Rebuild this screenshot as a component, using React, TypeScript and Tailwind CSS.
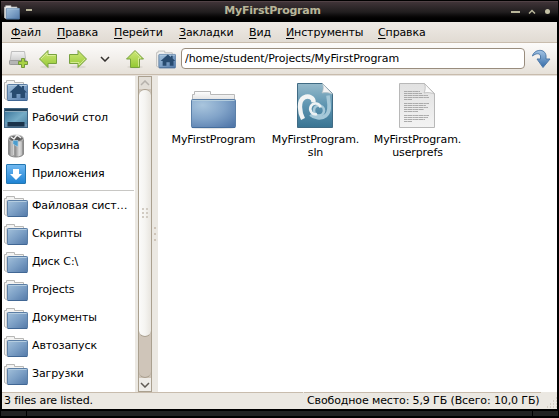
import React from "react";

type FolderProps = { id: string; home?: boolean; size?: number };

function SmallFolder({ id, home, size = 24 }: FolderProps) {
  return (
    <svg width={size} height={size} viewBox="0 0 24 24" className="block shrink-0">
      <defs>
        <linearGradient id={id} x1="0" y1="0" x2="1" y2="1">
          <stop offset="0" stopColor="#a3c1db" />
          <stop offset="0.5" stopColor="#7c9fc5" />
          <stop offset="1" stopColor="#5379a8" />
        </linearGradient>
      </defs>
      <path d="M.5 20.500V4.500h2v-2h8v2h9V8H4v14.500z" fill="#f3f3f2" stroke="#b8b8b6" />
      <path d="M2 21V6.500h2.500V22z" fill="#d4d4d3" />
      <rect x="3.500" y="6.500" width="20" height="16" rx=".8" fill={`url(#${id})`} stroke="#5c7fa6" />
      <path d="M4.500 7.500h18" stroke="#b5cde0" />
      <path d="M4 22.500h19" stroke="#416794" />
      {home && <path d="M14.200 6.500 18 9.800V8h2v3.500l3 3h-2V20h-4.500v-4h-4v4H8v-5.500H5.500z" fill="#284b70" />}
    </svg>
  );
}

function DesktopIcon() {
  return (
    <svg width="24" height="24" viewBox="0 0 24 24" className="block shrink-0">
      <defs>
        <linearGradient id="desktop" x1="0" y1="0" x2="1" y2="1">
          <stop stopColor="#346f96" /><stop offset=".55" stopColor="#75acc6" /><stop offset="1" stopColor="#457b9d" />
        </linearGradient>
      </defs>
      <rect x=".5" y="2.500" width="23" height="19" fill="url(#desktop)" stroke="#3f6482" />
      <path d="M1 4h22" stroke="#20415a" strokeWidth="2" />
      <path d="M1 5.500h22" stroke="#8caabc" />
      <path d="M1 19.500h22" stroke="#6d93b3" strokeWidth="3" />
      <rect x="3.500" y="16" width="17" height="4.500" fill="#1b344b" />
    </svg>
  );
}

function TrashIcon() {
  return (
    <svg width="24" height="24" viewBox="0 0 24 24" className="block shrink-0">
      <defs>
        <linearGradient id="trash">
          <stop stopColor="#777" /><stop offset=".23" stopColor="#c3c3c3" /><stop offset=".45" stopColor="#8d8d8d" />
          <stop offset=".72" stopColor="#dedede" /><stop offset="1" stopColor="#808080" />
        </linearGradient>
      </defs>
      <path d="M4.500 5v15c1 4 14 4 15 0V5z" fill="url(#trash)" stroke="#8a8a8a" />
      <ellipse cx="12" cy="4.500" rx="7.500" ry="3.500" fill="#777" stroke="#c2c2c2" />
      <ellipse cx="12" cy="4.500" rx="5.500" ry="2" fill="#555" />
      <path d="m7 3 3 2 3-4 4 3" fill="none" stroke="#eee" strokeWidth="1.500" />
      <path d="M9.500 8v13M17 8v13" stroke="#ddd" strokeWidth=".8" />
      <path d="M9 6.500h5v6l-3-1-2-2z" fill="#4b9dce" stroke="#b9d5e5" strokeWidth=".6" />
    </svg>
  );
}

function AppsIcon() {
  return (
    <svg width="24" height="24" viewBox="0 0 24 24" className="block shrink-0">
      <defs><linearGradient id="apps" x2="0" y2="1"><stop stopColor="#73baf2" /><stop offset="1" stopColor="#1d82d3" /></linearGradient></defs>
      <rect x="2.500" y="2.500" width="19" height="19" rx=".5" fill="url(#apps)" stroke="#2377b2" />
      <path d="M9 7h6v5h3l-6 6-6-6h3z" fill="#fff" />
    </svg>
  );
}

function BigFolder() {
  return (
    <svg width="48" height="48" viewBox="0 0 48 48" className="block">
      <defs>
        <radialGradient id="big-folder" cx=".25" cy=".2" r="1">
          <stop stopColor="#a9c5dd" /><stop offset=".5" stopColor="#82a4c9" /><stop offset="1" stopColor="#5278aa" />
        </radialGradient>
        <linearGradient id="paper" x2="0" y2="1"><stop stopColor="#fff" /><stop offset="1" stopColor="#dedede" /></linearGradient>
      </defs>
      <ellipse cx="24" cy="46" rx="21" ry="1.200" fill="#e3e3e3" />
      <path d="M3.500 19V12.500h2v-3h16v3h24V19z" fill="url(#paper)" stroke="#b8b8b8" />
      <rect x="2.500" y="17.500" width="44" height="28" rx="1" fill="url(#big-folder)" stroke="#5c80a8" />
      <path d="M3.500 18.500h42" stroke="#b4cddd" />
      <path d="M3 45.500h43" stroke="#456d9c" />
    </svg>
  );
}

function SolutionIcon() {
  return (
    <svg width="48" height="48" viewBox="0 0 48 48" className="block">
      <defs><linearGradient id="sln" x2="0" y2="1"><stop stopColor="#96bacb" /><stop offset=".5" stopColor="#5d94b0" /><stop offset="1" stopColor="#397493" /></linearGradient></defs>
      <path d="M6.500 1.500h25l10 10v34h-35z" fill="url(#sln)" stroke="#406b84" />
      <path d="M37 13.500c.5 6 3.500 15-2 20-5 4-12 2.500-15.500-1" fill="none" stroke="#a5c8d8" strokeWidth="3.600" />
      <circle cx="28" cy="28.500" r="5" fill="none" stroke="#a5c8d8" strokeWidth="2.600" />
      <path d="M12 37C8.500 30 7 19 13 15.500c5-2.500 10 .5 9.500 5" fill="none" stroke="#f2f4f4" strokeWidth="4.400" />
      <path d="M29.500 25.500c-1-4.500-7-5.500-9.500-1.500-2.500 4.500 1.500 9.500 6 8" fill="none" stroke="#edf2f4" strokeWidth="2.600" />
      <path d="M31.500 1.500C33 5 32 9 31 11c4-1 8 0 10.500 1z" fill="#f3f3f3" stroke="#b3c0c5" strokeWidth=".7" />
    </svg>
  );
}

function DocumentIcon() {
  return (
    <svg width="48" height="48" viewBox="0 0 48 48" className="block">
      <defs><linearGradient id="document" x2="0" y2="1"><stop stopColor="#e1e1e1" /><stop offset="1" stopColor="#f3f3f3" /></linearGradient></defs>
      <path d="M6.500 1.500h25l10 10v34h-35z" fill="url(#document)" stroke="#b8b8b8" />
      <path d="M11 9.500h16M11 11.500h18M11 13.500h24M11 15.500h25M11 17.500h8M11 21.500h25M11 23.500h22M11 25.500h24M11 27.500h20M11 29.500h14M11 33.500h25M11 35.500h24M11 37.500h21M11 39.500h8" stroke="#a3a3a3" strokeWidth=".9" strokeDasharray="3 .4 5 .4 2 .3" />
      <path d="M31.500 1.500C33 5 32 9 31 11c4-1 8 0 10.500 1z" fill="#fafafa" stroke="#b8b8b8" strokeWidth=".8" />
    </svg>
  );
}

function GreenArrow({ direction }: { direction: "left" | "right" | "up" }) {
  const rotation = direction === "left" ? "rotate(0 12 12)" : direction === "right" ? "rotate(180 12 12)" : "rotate(90 12 12)";
  const fill = direction === "left" ? "url(#green-left)" : direction === "right" ? "url(#green-right)" : "url(#green-up)";
  return (
    <svg width="24" height="24" viewBox="0 0 24 24" className="block">
      <defs>
        <linearGradient id="green-left" x2="0" y2="1"><stop stopColor="#d0e87a" /><stop offset="1" stopColor="#93c832" /></linearGradient>
        <linearGradient id="green-right" x1="0" y1="1" x2="0" y2="0"><stop stopColor="#d0e87a" /><stop offset="1" stopColor="#93c832" /></linearGradient>
        <linearGradient id="green-up" x2="1" y2="0"><stop stopColor="#d0e87a" /><stop offset="1" stopColor="#93c832" /></linearGradient>
      </defs>
      <ellipse cx="12" cy="20" rx="8" ry="1.500" fill="#dcd8d1" />
      <path transform={rotation} d="M3.500 12 12 3.500v4h8.500v9H12v4z" fill={fill} stroke="#78a23f" strokeLinejoin="round" />
      <path transform={rotation} d="m5 12 6-6v2.500h8.500" fill="none" stroke="#e0f0a4" strokeWidth=".8" />
    </svg>
  );
}

function Toolbar() {
  return (
    <div className="flex h-8 shrink-0 items-center border-b border-[#c8bcad] bg-linear-to-b from-[#fcfbfa] via-[#f2efeb] to-[#e6e1d9] pl-1">
      <div className="flex w-6 shrink-0 justify-center">
        <svg width="24" height="24" viewBox="0 0 24 24">
          <defs><linearGradient id="new" x2="0" y2="1"><stop stopColor="#f4f4f4" /><stop offset="1" stopColor="#cacaca" /></linearGradient></defs>
          <path d="M5.500 4.500h13l1.500 10H4z" fill="url(#new)" stroke="#bdbdbd" />
          <rect x="3.500" y="13.500" width="17" height="4" rx=".7" fill="#b5b5b5" stroke="#9a9a9a" />
          <path d="M12.500 14.500h3v-3h3v3h3v3h-3v3h-3v-3h-3z" fill="#a9d245" stroke="#73993d" />
        </svg>
      </div>
      <div className="ml-[6px]"><GreenArrow direction="left" /></div>
      <div className="ml-[6px]"><GreenArrow direction="right" /></div>
      <svg className="ml-[10px] mt-px shrink-0" width="10" height="6" viewBox="0 0 10 6"><path d="m1 1 4 4 4-4" fill="none" stroke="#33302d" strokeWidth="1.500" /></svg>
      <div className="ml-[13px]"><GreenArrow direction="up" /></div>
      <div className="ml-[9px]"><SmallFolder id="toolbar-folder" home size={20} /></div>
      <input aria-label="Путь" className="ml-[5px] h-[21px] w-[344px] rounded-[4px] border border-[#998d7e] bg-white px-[3px] text-[11px] leading-4 tracking-[-0.08px] outline-none" defaultValue="/home/student/Projects/MyFirstProgram" />
      <svg className="ml-[6px] shrink-0" width="22" height="22" viewBox="0 0 22 22">
        <defs><linearGradient id="go" x2="0" y2="1"><stop stopColor="#a3c4e4" /><stop offset="1" stopColor="#356ca8" /></linearGradient></defs>
        <path d="M1.500 8C3 1 14.500 0 15 8v3h4l-7 8.500L6 11h3.500V8C9 5 5 5 1.500 8z" fill="url(#go)" stroke="#4f7aa9" strokeLinejoin="round" />
      </svg>
    </div>
  );
}

const menus = [
  ["Ф", "айл", "w-[46px]"], ["П", "равка", "w-[57px]"], ["П", "ерейти", "w-[65px]"],
  ["З", "акладки", "w-[70px]"], ["В", "ид", "w-[37px]"], ["И", "нструменты", "w-[92px]"], ["С", "правка", "w-[60px]"],
];

const places = ["Файловая сист…", "Скрипты", "Диск C:\\", "Projects", "Документы", "Автозапуск", "Загрузки"];

function PlaceRow({ icon, label }: { icon: React.ReactNode; label: string }) {
  return <div className="flex h-7 shrink-0 items-center gap-1 pl-[2px]">{icon}<span className="whitespace-nowrap leading-4">{label}</span></div>;
}

function Sidebar() {
  return (
    <aside className="flex w-[133px] shrink-0 flex-col bg-white">
      <PlaceRow icon={<SmallFolder id="student" home />} label="student" />
      <PlaceRow icon={<DesktopIcon />} label="Рабочий стол" />
      <PlaceRow icon={<TrashIcon />} label="Корзина" />
      <PlaceRow icon={<AppsIcon />} label="Приложения" />
      <div className="mx-px mt-[2px] h-px shrink-0 bg-[#c8c7c4]" />
      <div className="h-px shrink-0" />
      {places.map((label, index) => <PlaceRow key={label} icon={<SmallFolder id={`place-${index}`} />} label={label} />)}
    </aside>
  );
}

function Scrollbar() {
  return (
    <div className="flex w-[23px] shrink-0 bg-[#ebe8e2] pl-[3px]">
      <div className="flex h-full w-[14px] flex-col border border-[#aaa08f] bg-[#cfc5b9]">
        <div className="flex h-[12px] shrink-0 items-center justify-center bg-[#e2ded7]"><svg width="10" height="6" viewBox="0 0 10 6"><path d="m1 5 4-4 4 4" fill="none" stroke="#b5b1ab" strokeWidth="1.500" /></svg></div>
        <div className="flex h-[248px] shrink-0 items-center justify-center rounded-[6px] border-y border-[#aaa08f] bg-linear-to-r from-[#fbfbfa] via-[#f5f4f1] to-[#e8e5df]">
          <div className="grid grid-cols-2 gap-[2px]">{Array.from({ length: 6 }, (_, i) => <span key={i} className="size-[2px] bg-[#d1cbc2]" />)}</div>
        </div>
        <div className="grow rounded-b-[6px] border-b border-[#aaa08f]" />
        <div className="flex h-[13px] shrink-0 items-center justify-center bg-[#eeece8]"><svg width="10" height="6" viewBox="0 0 10 6"><path d="m1 1 4 4 4-4" fill="none" stroke="#5f5a54" strokeWidth="1.500" /></svg></div>
      </div>
      <div className="flex w-[6px] flex-col items-center justify-center gap-1">{[0, 1, 2].map(i => <span key={i} className="size-[2px] rounded-full bg-[#c5b8aa]" />)}</div>
    </div>
  );
}

function FileItem({ icon, lines }: { icon: React.ReactNode; lines: string[] }) {
  return <div className="flex w-[102px] shrink-0 flex-col items-center">{icon}<div className="mt-[3px] pl-px text-center leading-[13px]">{lines.map(line => <div key={line} className="whitespace-nowrap">{line}</div>)}</div></div>;
}

export default function App() {
  return (
    <main className="flex h-[418px] w-[559px] flex-col overflow-hidden bg-black [font-family:'DejaVu_Sans','Liberation_Sans',sans-serif] text-[11px] tracking-[-0.12px] text-black">
      <header className="mx-px mt-px flex h-[21px] shrink-0 items-center border-t border-[#514246] bg-linear-to-b from-[#403438] via-[#211e1f] to-black px-[3px] text-[#b9b69a]">
        <div className="flex w-[92px] items-center gap-[6px]"><SmallFolder id="title" size={16} /><span className="mb-1 h-[2px] w-[6px] bg-[#b9b69a]" /></div>
        <h1 className="flex-1 pb-[2px] text-center text-[11px] leading-4 font-bold tracking-[-0.25px]">MyFirstProgram</h1>
        <div className="flex w-[106px] items-center justify-end pr-[5px]"><span className="h-[2px] w-[9px] bg-[#b9b69a]" /><svg className="mb-px ml-2" width="8" height="5" viewBox="0 0 8 5"><path d="m1 4.500 3-3 3 3" fill="none" stroke="#b9b69a" strokeWidth="1.500" /></svg><span className="mb-[2px] ml-[9px] size-[5px] rounded-full bg-[#c5c2a6]" /></div>
      </header>
      <div className="mx-[2px] flex h-[387px] shrink-0 flex-col bg-[#ebe8e2]">
        <nav className="flex h-[21px] shrink-0 items-center border-b border-[#c8bcad] bg-linear-to-b from-[#eeeae5] to-[#e1dbd3] pt-[2px] pl-[9px]">
          {menus.map(([initial, rest, width]) => <div key={initial + rest} className={`${width} shrink-0 whitespace-nowrap leading-4`}><span className="underline underline-offset-2">{initial}</span>{rest}</div>)}
        </nav>
        <Toolbar />
        <div className="flex h-[317px] shrink-0 border-t border-[#e7e2dc]">
          <Sidebar />
          <Scrollbar />
          <section className="flex grow bg-white pt-[6px] pl-[4px]">
            <FileItem icon={<BigFolder />} lines={["MyFirstProgram"]} />
            <FileItem icon={<SolutionIcon />} lines={["MyFirstProgram.", "sln"]} />
            <FileItem icon={<DocumentIcon />} lines={["MyFirstProgram.", "userprefs"]} />
          </section>
        </div>
        <footer className="flex h-[17px] shrink-0 items-center gap-px bg-[#ebe8e2]">
          <div className="flex h-full w-[301px] shrink-0 items-center border-t border-[#c8bcad] pl-[2px]">3 files are listed.</div>
          <div className="flex h-full w-[237px] shrink-0 items-center border-t border-[#c8bcad] pl-[3px] whitespace-nowrap">Свободное место: 5,9 ГБ (Всего: 10,0 ГБ)</div>
          <svg width="15" height="17" viewBox="0 0 15 17"><path d="M5 15h10M8 12h7M11 9h4M14 6h1" stroke="#bdb3a7" strokeDasharray="1 2" /></svg>
        </footer>
      </div>
      <div className="mt-[2px] flex h-[5px] shrink-0 gap-px bg-black px-px"><div className="w-[25px] bg-[#222]" /><div className="grow bg-[#222]" /><div className="w-[25px] bg-[#222]" /></div>
    </main>
  );
}
